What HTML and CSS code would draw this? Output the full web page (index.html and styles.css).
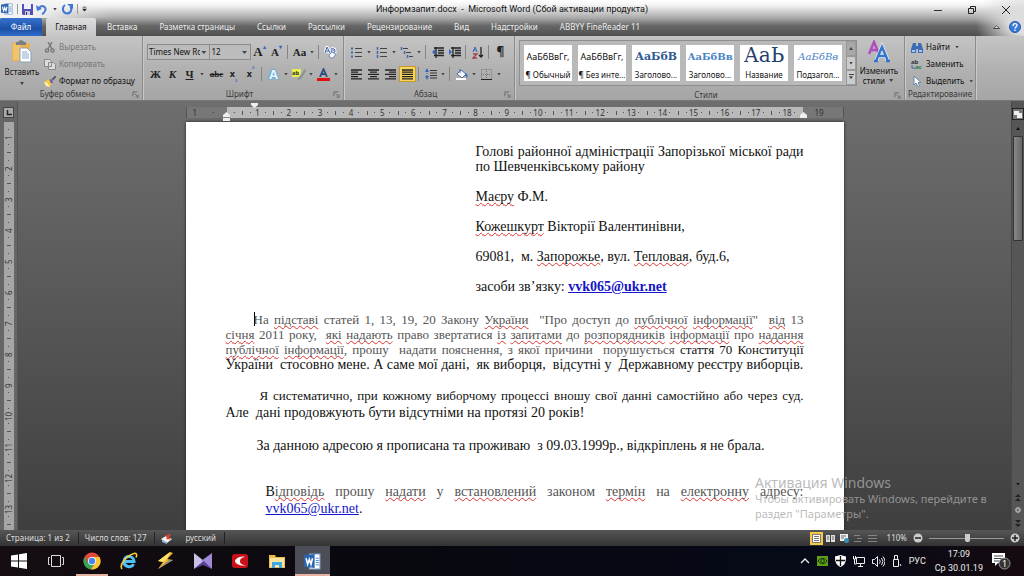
FILE: index.html
```html
<!DOCTYPE html>
<html lang="uk">
<head>
<meta charset="utf-8">
<title>Информзапит.docx - Microsoft Word</title>
<link rel="stylesheet" href="styles.css">
</head>
<body>
<svg class="defs" aria-hidden="true">
  <symbol id="word" viewBox="0 0 16 16"><path d="M5 1h10v14H5z" fill="#fff" stroke="#7da3cf"/><path d="M11 5h3M11 7h3M11 9h3M11 11h3" stroke="#5b8fce"/><path d="M0 2l10-1v13L0 13z" fill="#2a66b0"/><path d="M2 5l1.400 5.500L5 6l1.600 4.500L8 5" fill="none" stroke="#fff" stroke-width="1.500"/></symbol>
  <symbol id="launch" viewBox="0 0 8 8"><path d="M1 6V1h5M3 3l3 3M7 4v3H4" fill="none" stroke="#666"/></symbol>
</svg>

<header class="top">
  <div class="titlebar">
    <div class="quick">
      <svg width="12" height="12"><use href="#word"/></svg>
      <i class="tsep"></i>
      <button aria-label="Сохранить"><svg width="11" height="11" viewBox="0 0 11 11"><path d="M0 0h11v11H1L0 10z" fill="#5350b5"/><path d="M2 0h7v5H2z" fill="#eef"/><path d="M3 7h5v4H3z" fill="#ccd"/><path d="M4 8h1v3H4z" fill="#335"/></svg></button>
      <button aria-label="Отменить"><svg width="12" height="11" viewBox="0 0 12 11"><path d="M3 4c3-4 8-1 6 3-.6 1.500-1.500 2.500-3 3" fill="none" stroke="#4b79d8" stroke-width="2"/><path d="M0 1l1 6 5-2z" fill="#4b79d8"/></svg></button>
      <i class="arrow"></i>
      <button aria-label="Повторить"><svg width="11" height="11" viewBox="0 0 11 11"><path d="M3 1C0 3 0 9 5 9.500 10 9 10 4 8 3" fill="none" stroke="#3f74da" stroke-width="2"/><path d="M5 0h6v5z" fill="#3f74da"/></svg></button>
      <i class="tsep"></i>
      <button aria-label="Настройка панели"><svg width="5" height="6" viewBox="0 0 7 7"><path d="M1 1h5" stroke="#222"/><path d="M0 3h7L3.500 7z" fill="#222"/></svg></button>
    </div>
    <h1>Информзапит.docx&nbsp; -&nbsp; Microsoft Word (Сбой активации продукта)</h1>
    <div class="window">
      <button aria-label="Свернуть"><svg width="8" height="8"><path d="M0 4.500h8" stroke="#333"/></svg></button>
      <button aria-label="Развернуть"><svg width="8" height="8" fill="none" stroke="#222"><path d="M.5 2.500h5v5h-5zM2.500 2V.5h5v5H6"/></svg></button>
      <button aria-label="Закрыть"><svg width="8" height="8"><path d="M0 0l8 8M8 0L0 8" stroke="#222"/></svg></button>
    </div>
  </div>
  <nav class="tabs">
    <button class="file">Файл</button>
    <button class="current">Главная</button>
    <button>Вставка</button>
    <button>Разметка страницы</button>
    <button>Ссылки</button>
    <button>Рассылки</button>
    <button>Рецензирование</button>
    <button>Вид</button>
    <button>Надстройки</button>
    <button>ABBYY FineReader 11</button>
    <div class="help">
      <button aria-label="Свернуть ленту"><svg width="7" height="5"><path d="M.5 3.500l3-2.500 3 2.500z" fill="#fff" stroke="#444"/></svg></button>
      <button aria-label="Справка"><svg width="12" height="12"><circle cx="6" cy="6" r="5.500" fill="#3a7ad9" stroke="#245bb0"/><path d="M4 5c0-3 4-3 4-.6C8 6 6 5.800 6 7.500M6 8.500v1.500" fill="none" stroke="#fff" stroke-width="1.300"/></svg></button>
    </div>
  </nav>
</header>

<section class="ribbon">
  <div class="group clipboard">
    <div class="body">
      <button class="big">
        <svg width="22" height="24" viewBox="0 0 22 24"><path d="M1 3h18v18H1z" fill="#e8b250"/><path d="M2 4h8v16H2z" fill="#f0c46c"/><path d="M5 2h2c1-2.500 5-2.500 6 0h2v3H5z" fill="#7d7f84"/><path d="M9 8h7l4 4v10H9z" fill="#fff" stroke="#8aa0bd"/><path d="M11 12h5M11 14h7M11 16h7M11 18h7" stroke="#8ea8cc"/></svg>
        <span>Вставить</span><i class="arrow"></i>
      </button>
      <div class="stack">
        <button class="off"><svg width="12" height="11" viewBox="0 0 12 11" fill="none" stroke="#777" stroke-width="1.400"><path d="M4 0l4 7M8 0L4 7"/><circle cx="3" cy="8.500" r="1.600"/><circle cx="8.500" cy="8.500" r="1.600"/></svg>Вырезать</button>
        <button class="off"><svg width="12" height="11" viewBox="0 0 12 11" fill="#ddd" stroke="#888"><path d="M.5.5h5l2 2v5h-7zM4.500 3.500h5l2 2v5h-7z"/></svg>Копировать</button>
        <button><svg width="12" height="11" viewBox="0 0 12 11"><path d="M0 6l5-3 4 4-4 4z" fill="#f3c742"/><path d="M0 6l3 .5L6 11l-4-1z" fill="#fff3ae"/><path d="M5 3l3 1 1 3-2 .5z" fill="#6b5bb1"/><path d="M8 4l4-4" stroke="#5c5c73" stroke-width="2"/></svg>Формат по образцу</button>
      </div>
    </div>
    <footer><span>Буфер обмена</span><svg width="7" height="7"><use href="#launch"/></svg></footer>
  </div>

  <div class="group font">
    <div class="body rows">
      <div class="row">
        <span class="combo name"><select aria-label="Шрифт"><option>Times New Ro</option></select></span>
        <span class="combo size"><select aria-label="Размер шрифта"><option>12</option></select></span>
        <button class="tool serif big-a">A<sup>▴</sup></button>
        <button class="tool serif small-a">A<sup>▾</sup></button>
        <i class="sep"></i>
        <button class="tool serif">Aa</button><i class="arrow"></i>
        <i class="sep"></i>
        <button class="tool" aria-label="Очистить формат"><svg width="13" height="13" viewBox="0 0 13 13"><path d="M1 7l2-6 3 6M2 5h3M7 3c3-1 4 0 4 3-3 1-4 0-4-1s2-1 4-1" fill="none" stroke="#fff" stroke-width="3"/><path d="M1 7l2-6 3 6M2 5h3M7 3c3-1 4 0 4 3-3 1-4 0-4-1s2-1 4-1" fill="none" stroke="#3d5da6"/><path d="M5 9l3-3 4 2-3 4H6z" fill="#f4f7ff" stroke="#7a8aaa"/></svg></button>
      </div>
      <div class="row">
        <button class="tool serif">Ж</button>
        <button class="tool serif ital">К</button>
        <button class="tool serif und">Ч</button><i class="arrow wide"></i>
        <button class="tool serif strike">abc</button>
        <button class="tool">x<sub>₂</sub></button>
        <button class="tool">x<sup>²</sup></button>
        <i class="sep"></i>
        <button class="tool glow">A</button><i class="arrow"></i>
        <button class="tool" aria-label="Выделение цветом"><svg width="14" height="13" viewBox="0 0 14 13"><path d="M0 1h9v8H0z" fill="#e9ef4d"/><path d="M5 12l2-3 6-8 1 2-5 8z" fill="#8b9299"/><text x="0" y="7" class="mini">ab</text></svg></button><i class="arrow"></i>
        <button class="tool" aria-label="Цвет текста"><svg width="13" height="13" viewBox="0 0 13 13"><path d="M3 9l3.500-8L10 9M4.500 6h4" fill="none" stroke="#2d4d80" stroke-width="1.800"/><path d="M0 10h13v3H0z" fill="#e01010"/></svg></button><i class="arrow"></i>
      </div>
    </div>
    <footer><span>Шрифт</span><svg width="7" height="7"><use href="#launch"/></svg></footer>
  </div>

  <div class="group para">
    <div class="body rows">
      <div class="row">
        <button class="tool" aria-label="Маркеры"><svg width="12" height="11"><path d="M4 1.500h7M4 5.500h7M4 9.500h7" stroke="#444"/><path d="M0 1.500h2M0 5.500h2M0 9.500h2" stroke="#3c68b4" stroke-width="2"/></svg></button><i class="arrow"></i>
        <button class="tool" aria-label="Нумерация"><svg width="12" height="11"><path d="M4 1.500h7M4 5.500h7M4 9.500h7" stroke="#444"/><path d="M1.500 0v3M1.500 4v3M1.500 8v3" stroke="#3c68b4" stroke-width="1.500"/></svg></button><i class="arrow"></i>
        <button class="tool" aria-label="Многоуровневый список"><svg width="13" height="11"><path d="M3 1.500h5M6 5.500h5M9 9.500h4" stroke="#444"/><path d="M1.500 0v3M4.500 4v3M7.500 8v3" stroke="#3c68b4" stroke-width="1.500"/></svg></button><i class="arrow"></i>
        <i class="sep"></i>
        <button class="tool" aria-label="Уменьшить отступ"><svg width="12" height="11"><path d="M2 1h10M6 3.500h6M6 6h6M2 8.500h10M4 0v11" stroke="#222" stroke-width="1.300"/><path d="M0 5l3-3v6z" fill="#3867bd"/></svg></button>
        <button class="tool" aria-label="Увеличить отступ"><svg width="12" height="11"><path d="M2 1h10M6 3.500h6M6 6h6M2 8.500h10M4 0v11" stroke="#222" stroke-width="1.300"/><path d="M3 5L0 2v6z" fill="#3867bd"/></svg></button>
        <i class="sep"></i>
        <button class="tool" aria-label="Сортировка"><svg width="12" height="13" fill="none"><path d="M1 6l2-5 2 5M1.500 4h3" stroke="#3867bd"/><path d="M1 8h4l-4 4h4" stroke="#a6414a" stroke-width="1.300"/><path d="M9 1v10M7 9l2 2 2-2" stroke="#222" stroke-width="1.300"/></svg></button>
        <i class="sep"></i>
        <button class="tool pilcrow">¶</button>
      </div>
      <div class="row">
        <button class="tool" aria-label="По левому краю"><svg width="11" height="11"><path d="M0 1h11M0 3.200h7M0 5.400h11M0 7.600h7M0 9.800h11" stroke="#222" stroke-width="1.300"/></svg></button>
        <button class="tool" aria-label="По центру"><svg width="11" height="11"><path d="M0 1h11M2 3.200h7M0 5.400h11M2 7.600h7M0 9.800h11" stroke="#222" stroke-width="1.300"/></svg></button>
        <button class="tool" aria-label="По правому краю"><svg width="11" height="11"><path d="M0 1h11M4 3.200h7M0 5.400h11M4 7.600h7M0 9.800h11" stroke="#222" stroke-width="1.300"/></svg></button>
        <button class="tool pressed" aria-label="По ширине"><svg width="11" height="11"><path d="M0 1h11M0 3.200h11M0 5.400h11M0 7.600h11M0 9.800h11" stroke="#222" stroke-width="1.300"/></svg></button>
        <i class="sep"></i>
        <button class="tool" aria-label="Интервал"><svg width="12" height="12"><path d="M5 2.500h7M5 5h7M5 7.500h7M5 10h7" stroke="#333"/><path d="M0 4l2-4 2 4zM0 8l2 4 2-4z" fill="#3867bd"/><path d="M2 3v6" stroke="#3867bd" stroke-dasharray="1"/></svg></button><i class="arrow"></i>
        <i class="sep"></i>
        <button class="tool" aria-label="Заливка"><svg width="13" height="12"><path d="M2 6l4-4 5 4-4 4z" fill="#f3f6fb" stroke="#526f9e"/><path d="M5 5V1" stroke="#3867bd"/><path d="M10 5c3 1 3 3 2 5l-2-3z" fill="#3867bd"/><path d="M1 11h10" stroke="#fff" stroke-width="2"/></svg></button><i class="arrow"></i>
        <button class="tool" aria-label="Границы"><svg width="11" height="11" fill="none"><path d="M.5.5h10v10M.5.5v10M5.500 0v10M0 5.500h10" stroke="#777" stroke-dasharray="1"/><path d="M0 10.500h11" stroke="#222"/></svg></button><i class="arrow"></i>
      </div>
    </div>
    <footer><span>Абзац</span><svg width="7" height="7"><use href="#launch"/></svg></footer>
  </div>

  <div class="group styles">
    <div class="body">
      <div class="gallery">
        <button class="card"><b class="plain">АаБбВвГг,</b><span>¶ Обычный</span></button>
        <button class="card"><b class="plain">АаБбВвГг,</b><span>¶ Без инте...</span></button>
        <button class="card"><b class="head1">АаБбВ</b><span>Заголово...</span></button>
        <button class="card"><b class="head2">АаБбВв</b><span>Заголово...</span></button>
        <button class="card"><b class="title">АаЬ</b><span>Название</span></button>
        <button class="card"><b class="subtitle">АаБбВв</b><span>Подзагол...</span></button>
        <div class="scroller">
          <button aria-label="Вверх" class="off"><i class="arrow up"></i></button>
          <button aria-label="Вниз"><i class="arrow"></i></button>
          <button aria-label="Ещё" class="more"><i class="arrow"></i></button>
        </div>
      </div>
      <button class="big change">
        <svg width="22" height="24" viewBox="0 0 22 24" fill="none"><path d="M1 14L6 2l5 12M3 10h6" stroke="#b04cc0" stroke-width="2.500"/><path d="M8 21l6-14 6 14M10.500 16h7" stroke="#eaf2ff" stroke-width="4"/><path d="M8 21l6-14 6 14M10.500 16h7M6 21h4M18 21h4" stroke="#3576c9" stroke-width="2.500"/></svg>
        <span>Изменить</span><span>стили <i class="arrow"></i></span>
      </button>
    </div>
    <footer><span>Стили</span><svg width="7" height="7"><use href="#launch"/></svg></footer>
  </div>

  <div class="group edit">
    <div class="body">
      <div class="stack">
        <button><svg width="12" height="11"><path d="M2 1h3v3h2V1h3l2 6v4H7V7H5v4H0V7z" fill="#3c6eb8"/><path d="M1 8h3v2H1zM8 8h3v2H8z" fill="#a9c6ee"/></svg>Найти<i class="arrow"></i></button>
        <button><svg width="12" height="11"><text x="0" y="5" class="mini">ab</text><text x="4" y="10" class="mini green">ac</text><path d="M1 6v3h3" fill="none" stroke="#3867bd"/></svg>Заменить</button>
        <button><svg width="12" height="11"><path d="M3 0v9l2-2 2 4 1.500-1L7 6.500h3z" fill="#fff" stroke="#6d87b0"/></svg>Выделить<i class="arrow"></i></button>
      </div>
    </div>
    <footer><span>Редактирование</span></footer>
  </div>
</section>

<main class="work">
  <div class="vside">
    <button class="corner" aria-label="Табуляция"><svg width="6" height="6"><path d="M1.500 0v4.500H6" fill="none" stroke="#222" stroke-width="1.500"/></svg></button>
    <div class="vruler"><span>1</span><span>2</span><span>3</span><span>4</span><span>5</span><span>6</span><span>7</span><span>8</span><span>9</span><span>10</span><span>11</span><span>12</span><span>13</span></div>
  </div>

  <div class="canvas">
    <div class="hruler">
      <div class="edge left"><span>1</span><span class="tick">·</span></div>
      <div class="scale">
        <i class="half">·</i>
        <span>1</span><span>2</span><span>3</span><span>4</span><span>5</span><span>6</span><span>7</span><span>8</span><span>9</span><span>10</span><span>11</span><span>12</span><span>13</span><span>14</span><span>15</span><span>16</span><span>17</span><span>18</span>
        <svg class="mark first" width="7" height="5"><path d="M0 0h7v2L3.500 5 0 2z" fill="#eee"/></svg>
        <svg class="mark hang" width="7" height="9"><path d="M0 9V3L3.500 0 7 3v6z" fill="#eee"/><path d="M0 5.500h7" stroke="#888"/></svg>
        <svg class="mark right" width="7" height="6"><path d="M0 6V3L3.500 0 7 3v3z" fill="#eee"/></svg>
      </div>
      <div class="edge right"><span>19</span></div>
    </div>
    <article class="page">
      <div class="address">
        <p><span class="full">Голові районної адміністрації Запорізької міської ради</span><span class="line">по Шевченківському району</span></p>
        <p><u>Маєру</u> Ф.М.</p>
        <p><u>Кожешкурт</u> Вікторії Валентинівни,</p>
        <p>69081,  м. <u>Запорожье</u>, вул. <u>Тепловая</u>, буд.6,</p>
        <p>засоби зв’язку: <a class="strong" href="mailto:vvk065@ukr.net">vvk065@ukr.net</a></p>
      </div>
      <p class="reason"><span class="full small soft indent"><i class="caret"></i>На <u>підставі</u> статей 1, 13, 19, 20 Закону <u>України</u>  "Про доступ до <u>публічної</u> <u>інформації</u>"  <u>від</u> 13</span><span class="full small soft"><u>січня</u> 2011 року,  <u>які</u> <u>надають</u> право звертатися <u>із</u> <u>запитами</u> до <u>розпорядників</u> <u>інформації</u> про <u>надання</u></span><span class="full small soft"><u>публічної</u> <u>інформації</u>, прошу  надати пояснення, з якої причини  порушується <em>стаття 70 Конституції</em></span><span class="line">України  стосовно мене. А саме мої дані,  як виборця,  відсутні у  Державному реєстру виборців.</span></p>
      <p class="loose"><span class="full small indent2">Я систематично, при кожному виборчому процессі вношу свої данні самостійно або через суд.</span><span class="line">Але  дані продовжують бути відсутніми на протязі 20 років!</span></p>
      <p class="indent">За данною адресою я прописана та проживаю  з 09.03.1999р., відкріплень я не брала.</p>
      <p class="loose answer"><span class="full soft"><em>В</em><u>ідповідь</u> прошу <u>надати</u> у <u>встановлений</u> законом <u>термін</u> на <u>електронну</u> адресу:</span><span class="line"><a href="mailto:vvk065@ukr.net">vvk065@ukr.net</a>.</span></p>
    </article>
  </div>

  <div class="scrollbar">
    <button class="rulerbtn" aria-label="Линейка"><svg width="8" height="8"><path d="M0 1h5v2h3v5H3V5H0z" fill="#eee"/></svg></button>
    <button aria-label="Вверх"><i class="arrow up"></i></button>
    <div class="track"><div class="thumb"></div></div>
    <button aria-label="Вниз"><i class="arrow"></i></button>
    <button aria-label="Предыдущая страница"><svg width="6" height="9"><path d="M0 4l3-3 3 3zM0 8l3-3 3 3z" fill="#222"/></svg></button>
    <button aria-label="Объект перехода"><svg width="6" height="6"><circle cx="3" cy="3" r="2.300" fill="#777" stroke="#ccc"/></svg></button>
    <button aria-label="Следующая страница"><svg width="6" height="9"><path d="M0 1l3 3 3-3zM0 5l3 3 3-3z" fill="#222"/></svg></button>
  </div>
  <aside class="activation"><strong>Активация Windows</strong><span>Чтобы активировать Windows, перейдите в раздел "Параметры".</span></aside>
</main>

<div class="status">
  <span class="item">Страница: 1 из 2</span>
  <span class="item">Число слов: 127</span>
  <button aria-label="Правописание"><svg width="12" height="11"><path d="M0 6l5-3 6 3-5 4z" fill="#f5f5f5"/><path d="M1 7l5 2v2L1 9z" fill="#8fb2de"/><path d="M5 2l4 4M9 1L6 6" stroke="#d8402f" stroke-width="2"/></svg></button>
  <span class="item lang">русский</span>
  <div class="views">
    <button class="on" aria-label="Разметка страницы"><svg width="9" height="9"><path d="M.5.5h8v8h-8z" fill="#fff" stroke="#777"/><path d="M2 2.500h5M2 4.500h5M2 6.500h5" stroke="#777"/></svg></button>
    <button aria-label="Режим чтения"><svg width="9" height="9"><path d="M0 1h4v7H0zM5 1h4v7H5z" fill="#ddd"/><path d="M1 3h2M6 3h2M1 5h2M6 5h2" stroke="#666"/></svg></button>
    <button aria-label="Веб-документ"><svg width="9" height="9"><path d="M0 0h8v7H0z" fill="#eee"/><path d="M1 2h5M1 4h3" stroke="#667"/><circle cx="6.500" cy="6.500" r="2.500" fill="#3a8fb0"/></svg></button>
    <button aria-label="Структура"><svg width="9" height="9"><path d="M0 1.500h6M3 4.500h5M0 7.500h7" stroke="#858585"/></svg></button>
    <button aria-label="Черновик"><svg width="9" height="9"><path d="M0 1.500h9M0 4.500h9M0 7.500h9" stroke="#858585"/></svg></button>
  </div>
  <span class="percent">110%</span>
  <button aria-label="Уменьшить"><svg width="10" height="10"><circle cx="5" cy="5" r="4.500" fill="#ccc"/><path d="M2 5h6" stroke="#222" stroke-width="1.500"/></svg></button>
  <input class="zoom" type="range" min="0" max="100" value="52" aria-label="Масштаб">
  <button aria-label="Увеличить"><svg width="10" height="10"><circle cx="5" cy="5" r="4.500" fill="#ccc"/><path d="M2 5h6M5 2v6" stroke="#222" stroke-width="1.500"/></svg></button>
</div>

<div class="taskbar">
  <button aria-label="Пуск"><svg width="16" height="16"><path d="M0 2.500l7-1v6H0zM8 1.300L16 0v7.500H8zM0 8.500h7v6l-7-1zM8 8.500h8V16l-8-1.300z" fill="#fff"/></svg></button>
  <button aria-label="Представление задач"><svg width="16" height="14" fill="none" stroke="#ddd"><path d="M3.500 1.500h9v11h-9zM2 3.500H.5v7H2M14 3.500h1.500v7H14"/></svg></button>
  <button class="running" aria-label="Chrome"><svg width="18" height="18" viewBox="0 0 18 18"><circle cx="9" cy="9" r="8.500" fill="#e24a3b"/><path d="M1.500 5A8.500 8.500 0 0 0 8 17.500l4-6.500H5z" fill="#36a853"/><path d="M9 5h7.500A8.500 8.500 0 0 1 8 17.500l4.500-7z" fill="#fbc52d"/><circle cx="9" cy="9" r="4" fill="#fff"/><circle cx="9" cy="9" r="3.200" fill="#4384f1"/></svg></button>
  <button aria-label="Internet Explorer"><svg width="18" height="18" viewBox="0 0 18 18" fill="none"><path d="M4 9.500h10c0-6-9.500-7-10-.5-.4 6 7.500 7.500 9.500 3" stroke="#4fc0f5" stroke-width="3"/><path d="M2 17C-1 13 6 4 14 1.500c3-1 3 2 2 4" stroke="#f7c93d" stroke-width="1.600"/></svg></button>
  <button aria-label="Winamp"><svg width="18" height="18" viewBox="0 0 18 18"><path d="M13 0L1 9l5 1-5 7 15-9-6-1 6-6z" fill="#f6b72b"/><path d="M13 0L1 9l5 1 5-4z" fill="#ffe26a"/><path d="M1 17l15-9h-4z" fill="#8c8c8c"/></svg></button>
  <button aria-label="KMPlayer"><svg width="18" height="16"><path d="M0 0l10 8-10 8z" fill="#c9c0e8"/><path d="M18 0L7 8l11 8z" fill="#a08ad8"/><path d="M0 16l10-8 8 8-9-4z" fill="#5e429e"/></svg></button>
  <button aria-label="CCleaner"><svg width="16" height="14"><rect width="16" height="14" rx="3" fill="#c90f18"/><path d="M14 3C8 1 3 5 3 7s5 6 11 4c-5 0-6-2-6-4s2-4 6-4z" fill="#fff"/></svg></button>
  <button aria-label="Проводник"><svg width="16" height="14"><path d="M0 1h6l1 2h9v11H0z" fill="#e9bd4e"/><path d="M1 4h14v9H1z" fill="#fbe6a0"/><path d="M3 14V8h10v6h-3v-3H6v3z" fill="#3fa9e6"/></svg></button>
  <button class="running focused" aria-label="Word"><svg width="17" height="17"><use href="#word"/></svg></button>
  <div class="tray">
    <svg width="10" height="6"><path d="M1 5l4-4 4 4" fill="none" stroke="#eee" stroke-width="1.300"/></svg>
    <svg width="11" height="10"><path d="M0 0h11v10H0z" fill="#5f9e18"/><path d="M1 5c3-4 7-3 9 0-2 3-6 4-9 0zM3.500 5c1-2 3.500-2 4 0-1 2-3 2-4 0" fill="none" stroke="#17330a"/></svg>
    <svg width="11" height="12"><path d="M0 1.500L5.500 0 11 1.500C11 7 10 10 5.500 12 1 10 0 7 0 1.500z" fill="#fff"/><path d="M5.500 1v10M1 5.500h9" stroke="#111" stroke-width="1.300"/></svg>
    <svg width="12" height="11" fill="none" stroke="#eee"><path d="M3.500 1.500h8v6h-8zM7.500 7.500v3M5 10.500h5M.5 0v3h2V0M1.500 3v5h2"/></svg>
    <svg width="13" height="11" fill="none" stroke="#eee"><path d="M.5 3.500h2l3-3v10l-3-3h-2zM7.500 3.500q1.500 2 0 4M9.500 2q3 3.500 0 7M11 .5q4 5 0 10"/></svg>
    <svg width="10" height="12" fill="none" stroke="#eee"><path d="M1.500 4.500h5v7h-5zM2.500 4V.5h3V4M8 9l1 2"/></svg>
    <span>РУС</span>
    <time><span>17:09</span><span>Ср 30.01.19</span></time>
    <button aria-label="Уведомления"><svg width="20" height="18" viewBox="0 0 20 18"><path d="M0 1h13v10H6l-3 3v-3H0z" fill="#fff"/><path d="M2 4h9M2 6.500h9M2 9h5" stroke="#444"/><circle cx="12.500" cy="11.500" r="5.500" fill="#333" stroke="#999"/><text x="10" y="15" class="badge">1</text></svg></button>
  </div>
</div>
</body>
</html>
```
FILE: styles.css
```css
* { box-sizing: border-box; }
body {
  margin: 0;
  height: 100vh;
  overflow: hidden;
  display: flex;
  flex-direction: column;
  font: 8px/12px "Noto Sans", "Open Sans", sans-serif;
  color: #222;
  background: #555;
}
.defs { position: absolute; width: 0; height: 0; }
button { margin: 0; padding: 0; border: 0; background: none; font: inherit; color: inherit; display: flex; align-items: center; justify-content: center; white-space: nowrap; }
svg { flex: none; display: block; }
.arrow { flex: none; width: 8px; height: 3px; background: #444; clip-path: polygon(2px 0, 6px 0, 4px 3px); display: inline-block; }
.arrow.wide { width: 10px; }
.arrow.up { transform: rotate(180deg); }

.top {
  flex: none;
  background:
    radial-gradient(ellipse 48px 40px at 100% 22px, #ddd 30%, transparent),
    linear-gradient(#fff, #f4f4f4 5px, #aaa 18px, #666 26px, #505050);
}
.titlebar { height: 18px; display: grid; grid-template-columns: 1fr auto 1fr; align-items: center; background: linear-gradient(90deg, #f3f3f3 30px, transparent 110px); }
.quick { display: flex; align-items: center; gap: 3px; padding-left: 1px; }
.tsep { width: 1px; height: 10px; background: #999; margin: 0 1px; }
h1 { margin: 0; font: 9px/18px Roboto, sans-serif; color: #111; white-space: nowrap; }
.window { display: flex; justify-content: flex-end; gap: 26px; padding: 2px 14px 0 0; }
.tabs { height: 18px; display: flex; color: #eee; }
.tabs > button { padding: 0 11px; }
.tabs .file { width: 42px; padding: 0; background: linear-gradient(#3673cf, #1c4fa6 60%, #2f6dcc); border-radius: 2px 2px 0 0; color: #fff; }
.tabs .current { margin-left: 4px; width: 50px; padding: 0; background: linear-gradient(#ddd, #c6c6c6); color: #111; border-radius: 2px 2px 0 0; }
.tabs .help { margin-left: auto; display: flex; gap: 9px; padding-right: 3px; }

.ribbon { flex: none; display: flex; height: 65px; background: linear-gradient(#c4c4c4, #b2b2b2 50%, #a5a5a5); border-bottom: 1px solid #777; }
.group { display: flex; flex-direction: column; border-right: 1px solid #8b8b8b; box-shadow: 1px 0 #c9c9c9; }
.group .body { flex: 1; display: flex; }
.group footer { display: flex; height: 13px; align-items: center; padding: 1px 3px 0; color: #3a3a3a; }
.group footer span { flex: 1; text-align: center; }
.clipboard { width: 143px; }
.font { width: 201px; }
.para { width: 171px; }
.styles { width: 390px; }
.edit { width: 71px; }
.group.edit footer { padding: 1px 0 0; }
.big { flex-direction: column; justify-content: flex-start; width: 44px; padding-top: 4px; color: #111; }
.big .arrow { margin-top: 4px; }
.big svg { margin-bottom: 2px; }
.stack { display: flex; flex-direction: column; gap: 5px; padding-top: 5px; color: #111; }
.stack button { justify-content: flex-start; gap: 3px; height: 12px; }
.stack .off, .off { color: #777; }
.rows { flex-direction: column; gap: 6px; padding: 8px 4px 0; }
.row { display: flex; align-items: center; height: 16px; }
.tool { flex: none; width: 17px; height: 16px; font-weight: 700; font-size: 9px; color: #222; }
.tool sup, .tool sub { font-size: 6px; line-height: 6px; color: #3867bd; }
.tool sup { align-self: flex-start; }
.tool sub { align-self: flex-end; }
.serif { font-family: "Liberation Serif", serif; font-size: 11px; }
.big-a { font-size: 13px; }
.ital { font-style: italic; }
.und { text-decoration: underline; }
.strike { font-size: 9px; text-decoration: line-through; }
.glow { font-size: 13px; color: #e8f6ff; text-shadow: 0 0 1px #2f8fd0, 0 0 2px #4fb0e8, 0 0 3px #4fb0e8; }
.pilcrow { font-size: 12px; }
.pressed { background: #f8d55c; outline: 1px solid #c9992b; outline-offset: -1px; }
.sep { flex: none; width: 6px; height: 14px; background: linear-gradient(90deg, transparent 2px, #858585 2px, #858585 3px, transparent 3px); }
.mini { font: 700 6px "Noto Sans", sans-serif; fill: #333; }
.green { fill: #2a7a44; }
.combo { position: relative; display: flex; border: 1px solid #8b8b8b; height: 16px; }
.combo::after { content: ""; position: absolute; right: 3px; top: 6px; width: 5px; height: 3px; background: #444; clip-path: polygon(0 0, 100% 0, 50% 100%); }
.combo select { appearance: none; width: 100%; border: 0; padding: 0 9px 0 1px; background: #bcbcbc; color: #111; font: inherit; }
.combo.name { width: 64px; }
.combo.size { width: 41px; border-left: 0; }
.gallery { display: flex; gap: 6px; margin: 4px 0 2px 4px; padding: 4px 0 4px 4px; border: 1px solid #8f8f8f; background: #b9b9b9; width: 338px; }
.card { width: 48px; flex: none; flex-direction: column; justify-content: space-between; background: #fff; overflow: hidden; color: #111; }
.card b { height: 24px; line-height: 24px; font-weight: 400; }
.card .plain { font-size: 9px; }
.card .head1, .card .head2 { font-family: "DejaVu Serif", "Liberation Serif", serif; font-weight: 700; font-size: 11px; color: #2f5a93; }
.card .head2 { font-size: 10px; color: #4a84c6; }
.card .title { font-family: "DejaVu Serif", serif; font-size: 20px; line-height: 20px; color: #25406b; }
.card .subtitle { font-family: "DejaVu Serif", serif; font-style: italic; font-size: 10px; color: #4a84c6; }
.scroller { margin: -4px 0 -4px -2px; flex: 1; display: flex; flex-direction: column; }
.scroller button { flex: 1; border: 1px solid #999; background: #ccc; }
.scroller .off { background: #a8a8a8; }
.more::before { content: ""; position: absolute; width: 5px; height: 1px; margin-top: -6px; background: #444; }
.change span { line-height: 10px; }
.change .arrow { margin: 0; vertical-align: 2px; }
.edit .stack { padding-left: 6px; }

.work { flex: 1; min-height: 0; position: relative; display: flex; background: linear-gradient(#6e6e6e, #3f3f3f); }
.vside { width: 18px; flex: none; background: #666; border-right: 1px solid #555; display: flex; flex-direction: column; align-items: center; }
.corner { width: 11px; height: 11px; margin: 6px 0 4px; background: #aaa; border: 1px solid #444; flex: none; }
.vruler { width: 10px; flex: 1; background: #a6a6a6; overflow: hidden; display: flex; flex-direction: column; color: #333; }
.vruler span { height: 31px; flex: none; width: 10px; writing-mode: vertical-rl; transform: rotate(180deg); text-align: center; line-height: 10px; background: linear-gradient(#555, #555) 50% 0 / 4px 1px no-repeat, linear-gradient(#555, #555) 50% 8px / 1px 1px no-repeat, linear-gradient(#555, #555) 50% 23px / 1px 1px no-repeat; }
.canvas { flex: 1; min-width: 0; display: flex; flex-direction: column; align-items: center; overflow: hidden; padding-top: 6px; }
.hruler { width: 100%; max-width: 658px; height: 11px; flex: none; display: flex; background: #8b8b8b; line-height: 11px; color: #333; margin-bottom: 4px; border: solid #555; border-width: 0 1px; }
.edge { width: 40px; display: flex; background: #777; }
.edge.left { padding: 0 12px 0 6px; justify-content: space-between; }
.edge.right { padding-left: 12px; }
.scale { flex: 1; position: relative; display: flex; background: #b9b9b9; }
.half { flex: 1; text-align: center; font-style: normal; }
.scale span { flex: 2; text-align: center; background: linear-gradient(#555, #555) 0 50% / 1px 4px no-repeat, linear-gradient(#555, #555) 25% 50% / 1px 1px no-repeat, linear-gradient(#555, #555) 75% 50% / 1px 1px no-repeat; }
.mark { position: absolute; }
.first { left: 24px; top: -4px; }
.hang { left: -4px; top: 5px; }
.mark.right { right: -4px; top: 5px; }
.page { flex: none; width: 100%; max-width: 658px; min-height: 440px; padding: 22px 40px; background: #fff; font: 14px/15px "Liberation Serif", serif; color: #111; box-shadow: 0 0 3px #222; }
.page, .page div.address { display: flex; flex-direction: column; }
.page p { margin: 0; white-space: pre-wrap; }
.address { margin-left: 250px; gap: 15px; }
.line, .full { display: block; }
.full { text-align: justify; text-align-last: justify; }
.small { font-size: 13px; }
.soft { color: #555; }
.page em { font-style: normal; color: #111; }
.page u { text-decoration: underline wavy #d33 1px; text-underline-offset: 1px; text-decoration-skip-ink: none; }
.page a { color: #1414c8; }
.page .strong { font-weight: 700; }
.page .reason { padding-top: 18px; }
.indent { padding-left: 28px; }
.indent2 { padding-left: 34px; }
.caret { display: inline-block; width: 1px; height: 14px; margin-right: -1px; background: #000; vertical-align: -2px; }
.loose { line-height: 17px; }
.reason + .loose { padding-top: 15px; }
.loose + .indent { padding-top: 17px; padding-left: 31px; }
.page .answer { padding: 30px 0 0 40px; }
.scrollbar { width: 13px; flex: none; display: flex; flex-direction: column; align-items: stretch; gap: 3px; background: #565656; border-left: 1px solid #484848; padding-bottom: 2px; }
.scrollbar button { height: 10px; }
.scrollbar .rulerbtn { height: 12px; margin-top: 7px; background: #777; border: 1px solid #222; }
.scrollbar .arrow { background: #111; }
.track { flex: 1; }
.thumb { height: 31%; margin: 0 1px; background: linear-gradient(90deg, #888, #666); border: 1px solid #333; border-radius: 1px; }
.activation { position: absolute; right: 24px; bottom: 9px; width: 245px; color: #a9a9a9cc; font: 11px/15px "Noto Sans", sans-serif; }
.activation strong { display: block; font-weight: 400; font-size: 14px; line-height: 17px; }

.status { flex: none; height: 16px; display: flex; align-items: center; gap: 6px; padding: 0 4px 0 6px; background: linear-gradient(#565656, #333); color: #ddd; }
.item { padding-right: 8px; border-right: 1px solid #222; }
.lang { margin-left: 6px; }
.views { margin-left: auto; display: flex; gap: 1px; }
.views button { width: 13px; height: 13px; }
.views .on { background: #f4c94a; }
.percent { padding-left: 2px; }
.zoom { appearance: none; width: 75px; height: 10px; margin: 0; background: linear-gradient(#999, #999) center / 100% 1px no-repeat; }
.zoom::-webkit-slider-thumb { appearance: none; width: 5px; height: 8px; background: #ccc; border-radius: 0 0 2px 2px; }

.taskbar { flex: none; height: 30px; display: flex; background: linear-gradient(90deg, #150d12, #08080f 40%, #060a18 80%, #150a10); color: #eee; }
.taskbar > button { width: 37px; }
.taskbar .running { box-shadow: inset 0 -2px #e7b3a0; margin: 0 2px; width: 32px; }
.taskbar .focused { background: #4b4e56; width: 35px; margin: 0; }
.tray { margin-left: auto; display: flex; align-items: center; gap: 7px; padding-right: 12px; font: 9px/14px Roboto, sans-serif; }
.tray time { display: flex; flex-direction: column; align-items: center; margin: 0 2px 0 2px; }
.tray span { white-space: nowrap; }
.badge { font: 9px "Noto Sans", sans-serif; fill: #fff; }
```
